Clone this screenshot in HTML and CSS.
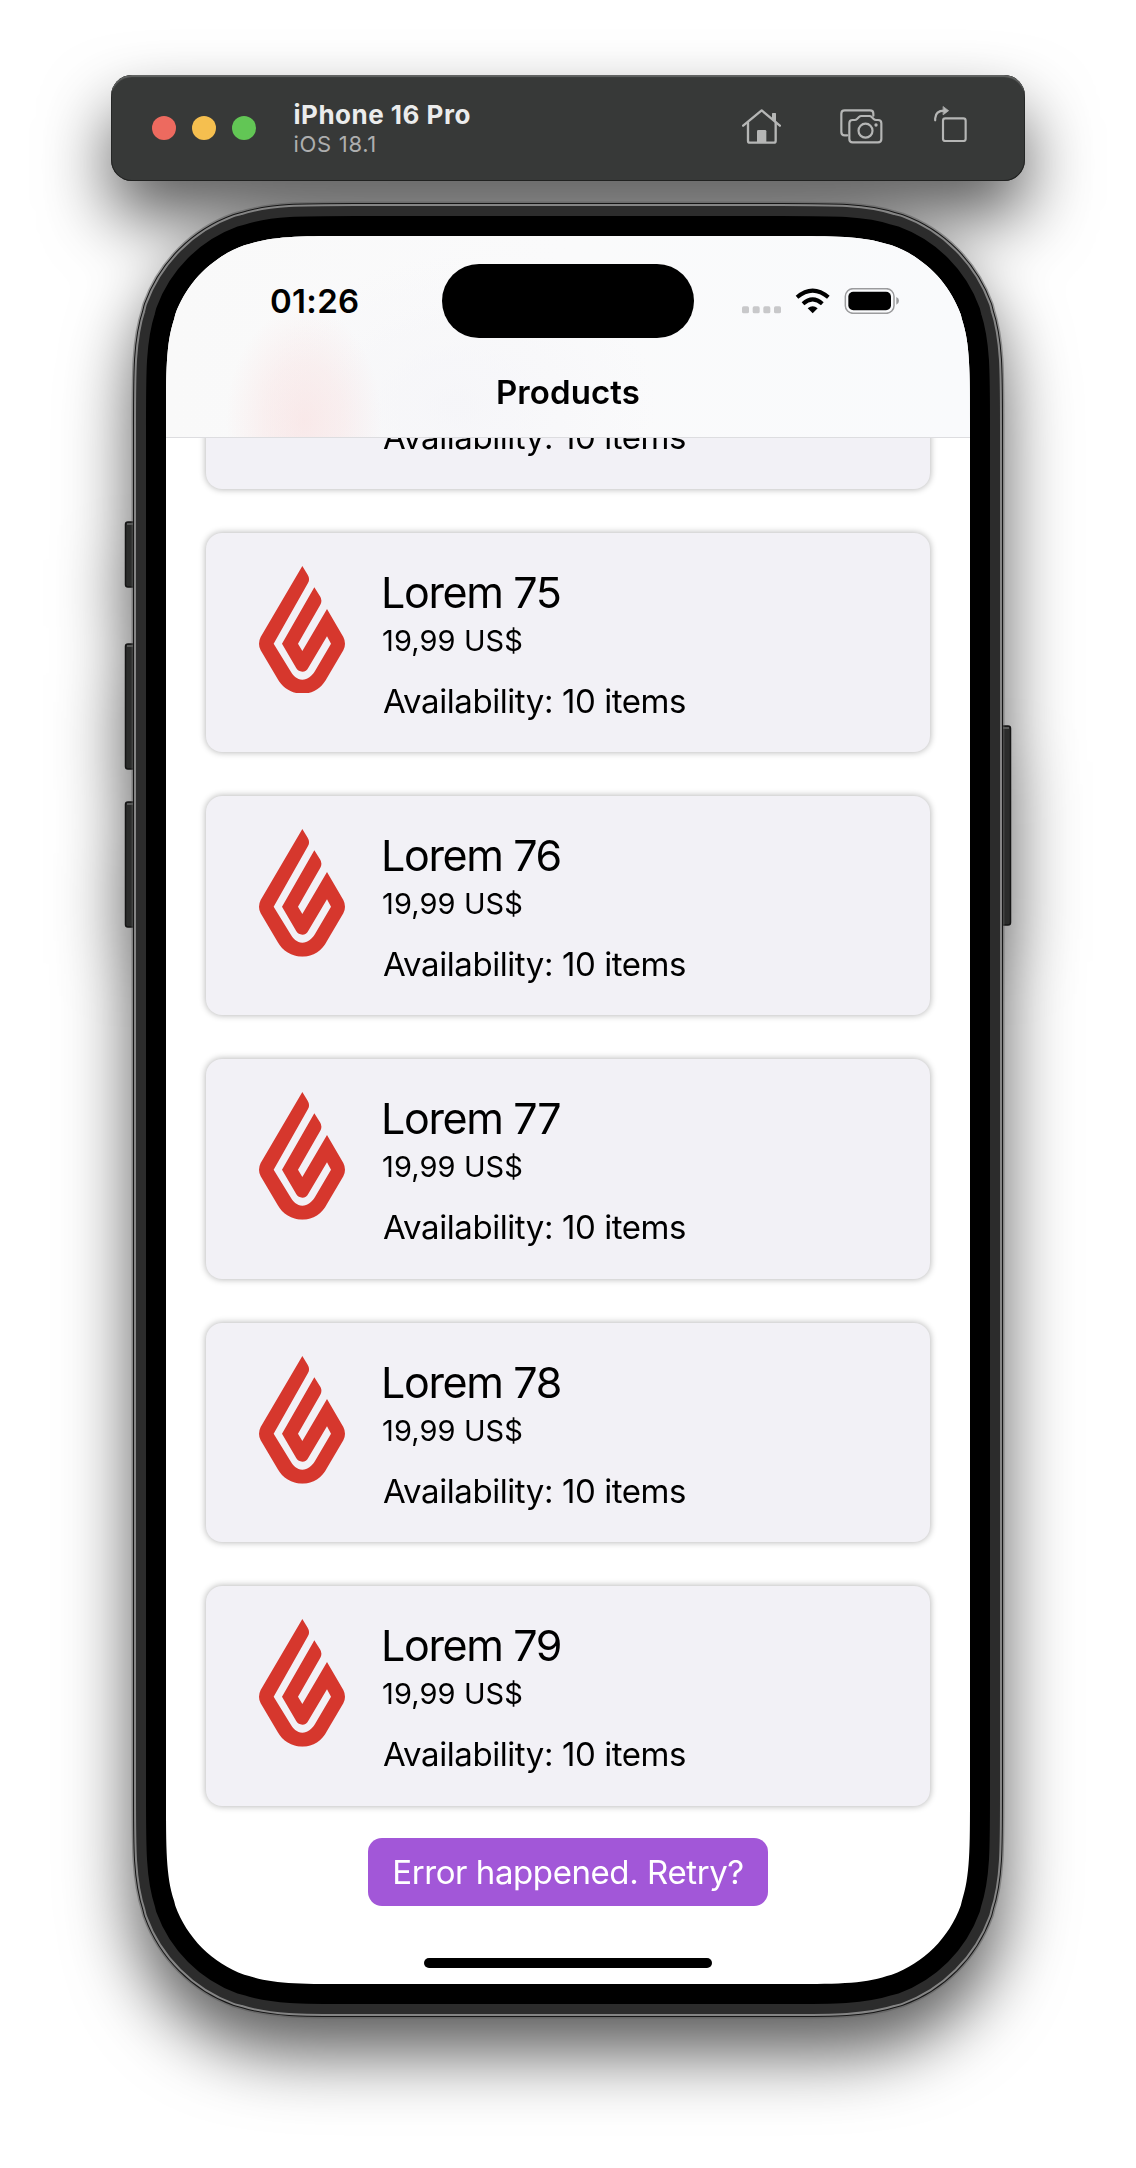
FILE: index.html
```html
<!DOCTYPE html>
<html lang="en">
<head>
<meta charset="utf-8">
<title>Products</title>
<link rel="stylesheet" href="styles.css">
</head>
<body>
<svg class="defs" aria-hidden="true">
  <symbol id="flame" viewBox="42 47 258 383">
    <path d="M172 47 L188 73 Q196 86 189 98 L86 280 L133 357 C144 377 156 388 172 388 C188 388 200 378 210 362 L258 280 L246 258 L190 352 Q184 364 172 364 Q160 364 154 354 L111 280 L208 111 L225 138 Q233 150 226 163 L159 280 L172 302 L246 176 L295 260 Q305 280 295 300 L246 383 C231 412 205 430 172 430 C140 430 112 412 98 386 L47 300 Q37 280 47 260 Z"/>
  </symbol>
</svg>
<div class="simulator">
  <header class="toolbar">
    <div class="lights"><i class="light red"></i><i class="light yellow"></i><i class="light green"></i></div>
    <div class="device">
      <div class="device-name">iPhone 16 Pro</div>
      <div class="device-os">iOS 18.1</div>
    </div>
    <div class="actions">
      <svg class="icon-home" viewBox="186 147 117 105" fill="none" stroke="#b5b6b5" stroke-width="7" stroke-linecap="round" stroke-linejoin="round">
        <path d="M189.500 197 L245 151 L299.500 197"/>
        <path d="M204 188 V242 Q204 248 210 248 H281 Q287 248 287 242 V188"/>
        <path d="M278 176 V161 H286 V183 Z" fill="#b5b6b5" stroke-width="4"/>
        <path d="M231 248 V214 Q231 210 235 210 H255 Q259 210 259 214 V248 Z" fill="#b5b6b5" stroke="none"/>
      </svg>
      <svg class="icon-camera" viewBox="480 148 128 104" fill="none" stroke="#b5b6b5" stroke-width="6.500" stroke-linecap="round" stroke-linejoin="round">
        <path d="M502 227 H494 Q484 227 484 217 V162 Q484 152 494 152 H570 Q580 152 580 162 V168"/>
        <path d="M518 181 H524 Q528 181 531 178 L537 172 Q540 169 544 169 H568 Q572 169 575 172 L581 178 Q584 181 588 181 H594 Q604 181 604 191 V238 Q604 248 594 248 H518 Q508 248 508 238 V191 Q508 181 518 181 Z"/>
        <circle cx="556.500" cy="213" r="21"/>
        <circle cx="588" cy="196" r="5" fill="#b5b6b5" stroke="none"/>
      </svg>
      <svg class="icon-rotate" viewBox="762 137 99 109" fill="none" stroke="#b5b6b5" stroke-width="6.500" stroke-linecap="round" stroke-linejoin="round">
        <rect x="789" y="174" width="68" height="68" rx="7"/>
        <path d="M765.500 180 V174 Q767 151 792 151"/>
        <path d="M790 139 L806 151 L790 163 Z" fill="#b5b6b5" stroke-width="2"/>
      </svg>
    </div>
  </header>

  <main class="phone">
    <svg class="frame" viewBox="0 0 804 1748" aria-hidden="true">
      <defs>
        <path id="body" d="M189.550 0 H614.450 C669.030 0 696.320 0 720.930 8.120 L725.690 9.290 C757.770 20.960 783.040 46.230 794.710 78.310 L795.880 83.070 C804 107.680 804 134.970 804 189.550 V1558.450 C804 1613.030 804 1640.320 795.880 1664.930 L794.710 1669.690 C783.040 1701.770 757.770 1727.040 725.690 1738.710 L720.930 1739.880 C696.320 1748 669.030 1748 614.450 1748 H189.550 C134.970 1748 107.680 1748 83.070 1739.880 L78.310 1738.710 C46.230 1727.040 20.960 1701.770 9.290 1669.690 L8.120 1664.930 C0 1640.320 0 1613.030 0 1558.450 V189.550 C0 134.970 0 107.680 8.120 83.070 L9.290 78.310 C20.960 46.230 46.230 20.960 78.310 9.290 L83.070 8.120 C107.680 0 134.970 0 189.550 0 Z"/>
      </defs>
      <g fill="#2b2c2b" stroke="#151515" stroke-width="1.500">
        <rect x="-40.500" y="286" width="14" height="65" rx="2.500"/>
        <rect x="-40.500" y="408" width="14" height="125" rx="2.500"/>
        <rect x="-40.500" y="566" width="14" height="125" rx="2.500"/>
        <rect x="830.500" y="490" width="14" height="199" rx="2.500"/>
      </g>
      <path stroke="#6a6a6a" stroke-width="1.500" d="M-39 288 H-33 M-39 410 H-33 M-39 568 H-33 M837 492 H843"/>
      <use href="#body" class="ring-halo"/>
      <use href="#body" class="ring-edge"/>
      <use href="#body" class="ring-light"/>
      <use href="#body" class="ring-metal"/>
      <use href="#body" class="ring-bezel"/>
    </svg>
    <div class="screen">
      <div class="navbar">
        <div class="status">
          <div class="time">01:26</div>
          <div class="island"></div>
          <svg class="status-icons" viewBox="127 294 474 78" aria-hidden="true">
            <g fill="#c8c8ca">
              <rect x="127" y="349" width="21" height="21" rx="5"/><rect x="159" y="349" width="21" height="21" rx="5"/><rect x="191" y="349" width="21" height="21" rx="5"/><rect x="223" y="349" width="21" height="21" rx="5"/>
            </g>
            <g fill="none" stroke="#000" stroke-width="12">
              <path d="M292 322 Q339 282 386 322"/>
              <path d="M310 341 Q339 315 368 341"/>
            </g>
            <path d="M339 370 L324 355 Q339 342 354 355 Z"/>
            <rect x="437" y="296" width="146" height="74" rx="23" fill="none" stroke="#9b9b9d" stroke-width="4.500"/>
            <rect x="446" y="305" width="128" height="56" rx="15"/>
            <path d="M590 321 Q598 325 598 332 Q598 340 590 344 Z" fill="#9b9b9d"/>
          </svg>
        </div>
        <h1 class="title">Products</h1>
      </div>
      <div class="list">
        <article class="card scrolled"><p class="stock">Availability: 10 items</p></article>
        <article class="card"><svg class="logo"><use href="#flame"/></svg><div class="info"><h2>Lorem 75</h2><p class="price">19,99 US$</p><p class="stock">Availability: 10 items</p></div></article>
        <article class="card"><svg class="logo"><use href="#flame"/></svg><div class="info"><h2>Lorem 76</h2><p class="price">19,99 US$</p><p class="stock">Availability: 10 items</p></div></article>
        <article class="card"><svg class="logo"><use href="#flame"/></svg><div class="info"><h2>Lorem 77</h2><p class="price">19,99 US$</p><p class="stock">Availability: 10 items</p></div></article>
        <article class="card"><svg class="logo"><use href="#flame"/></svg><div class="info"><h2>Lorem 78</h2><p class="price">19,99 US$</p><p class="stock">Availability: 10 items</p></div></article>
        <article class="card"><svg class="logo"><use href="#flame"/></svg><div class="info"><h2>Lorem 79</h2><p class="price">19,99 US$</p><p class="stock">Availability: 10 items</p></div></article>
        <button class="retry">Error happened. Retry?</button>
      </div>
      <div class="home-bar"></div>
    </div>
  </main>
</div>
</body>
</html>
```
FILE: styles.css
```css
* { box-sizing: border-box; }
body {
  margin: 0;
  background: #fff;
  font-family: Inter, "Liberation Sans", sans-serif;
  color: #000;
}
h1, h2, p { margin: 0; font-weight: 400; }
.defs { display: none; }

.simulator {
  height: 2168px;
  padding-top: 75px;
  display: flex;
  flex-direction: column;
  align-items: center;
  gap: 55px;
  overflow: hidden;
  filter: drop-shadow(0 36px 34px rgba(0, 0, 0, .64));
}

.toolbar {
  width: 914px;
  height: 106px;
  flex: none;
  padding: 0 58px 0 41px;
  display: flex;
  align-items: center;
  background: #373938;
  border-radius: 21px;
  box-shadow: inset 0 2px 1px #626463, inset 0 0 0 1px #202120;
}
.lights { display: flex; gap: 16px; }
.light { width: 24px; height: 24px; border-radius: 50%; }
.red { background: #ed6a5f; }
.yellow { background: #f5bf4f; }
.green { background: #62c655; }
.device { margin-left: 37.500px; padding-top: 2px; white-space: nowrap; }
.device-name {
  font-size: 26px;
  font-weight: 700;
  line-height: 30px;
  letter-spacing: .5px;
  color: #ebecec;
}
.device-os {
  font-size: 22px;
  line-height: 28px;
  letter-spacing: .7px;
  color: #adaeae;
}
.actions { margin: 0 0 3px auto; display: flex; align-items: flex-start; }
.icon-home { width: 39px; height: 35px; }
.icon-camera { width: 42.700px; height: 34.700px; margin-left: 59px; }
.icon-rotate { width: 33px; height: 36.300px; margin: -3px 0 0 51.300px; }

.phone { position: relative; flex: none; width: 804px; height: 1748px; }
.frame { position: absolute; inset: 0; width: 804px; height: 1748px; overflow: visible; }
.ring-halo { stroke: rgba(90, 90, 90, .5); stroke-width: 69px; }
.ring-edge { stroke: #161616; stroke-width: 66px; }
.ring-light { stroke: #858585; stroke-width: 64px; }
.ring-metal { stroke: #2c2c2c; stroke-width: 60px; }
.ring-bezel { stroke: #000; stroke-width: 40px; }

.screen {
  position: relative;
  height: 100%;
  display: flex;
  flex-direction: column;
  background: #fff;
  clip-path: path("M189.550 0H614.450C669.030 0 696.320 0 720.930 8.120L725.690 9.290C757.770 20.960 783.040 46.230 794.710 78.310L795.880 83.070C804 107.680 804 134.970 804 189.550V1558.450C804 1613.030 804 1640.320 795.880 1664.930L794.710 1669.690C783.040 1701.770 757.770 1727.040 725.690 1738.710L720.930 1739.880C696.320 1748 669.030 1748 614.450 1748H189.550C134.970 1748 107.680 1748 83.070 1739.880L78.310 1738.710C46.230 1727.040 20.960 1701.770 9.290 1669.690L8.120 1664.930C0 1640.320 0 1613.030 0 1558.450V189.550C0 134.970 0 107.680 8.120 83.070L9.290 78.310C20.960 46.230 46.230 20.960 78.310 9.290L83.070 8.120C107.680 0 134.970 0 189.550 0Z");
}

.navbar {
  flex: none;
  height: 201.500px;
  padding-top: 28px;
  border-bottom: 1.500px solid #dddde0;
  background:
    radial-gradient(ellipse 78px 115px at 138px 185px, rgba(249, 226, 226, .7), rgba(249, 229, 229, .5) 50%, rgba(249, 240, 240, 0)),
    radial-gradient(ellipse 200px 150px at 290px 170px, rgba(244, 244, 248, .7), rgba(244, 244, 248, 0)),
    linear-gradient(90deg, #f9f9f9, #fafafb 50%, #f9fafc);
}
.status { display: flex; height: 73.600px; align-items: center; }
.time {
  width: 172.300px;
  margin-left: 104px;
  font-size: 33px;
  font-weight: 600;
  line-height: 40px;
  letter-spacing: .3px;
}
.island { width: 251.400px; height: 73.600px; border-radius: 37px; background: #000; }
.status-icons { width: 158px; height: 26px; margin-left: 48.300px; }
.title {
  margin-top: 34.700px;
  text-align: center;
  font-size: 33px;
  font-weight: 600;
  line-height: 40px;
  letter-spacing: .1px;
}

.list {
  flex: 1;
  min-height: 0;
  padding: 0 40px;
  display: flex;
  flex-direction: column;
  gap: 44px;
  overflow: hidden;
}
.card {
  flex: none;
  height: 219.400px;
  padding: 33px 53px;
  display: flex;
  gap: 37px;
  background: #f2f1f6;
  border-radius: 16px;
  box-shadow: 0 0 7px rgba(0, 0, 0, .33);
}
.card.scrolled { margin-top: -168.200px; padding: 126px 176px 0; white-space: nowrap; }
.logo { width: 86px; height: 127.700px; fill: #d6372d; flex: none; }
.info { white-space: nowrap; }
.info h2 { margin-left: -1px; font-size: 43px; line-height: 52px; letter-spacing: -1.350px; }
.price { margin-top: 5px; font-size: 29px; line-height: 36px; letter-spacing: .1px; }
.stock { margin: 22px 0 0 1px; font-size: 33px; line-height: 40px; letter-spacing: -.430px; }

.retry {
  align-self: center;
  flex: none;
  width: 400px;
  height: 68px;
  margin-top: -12px;
  padding: 0;
  border: 0;
  border-radius: 14px;
  background: #a257d8;
  color: #fff;
  font: 400 33px/68px Inter, "Liberation Sans", sans-serif;
  letter-spacing: -.420px;
  white-space: nowrap;
}
.home-bar {
  position: absolute;
  left: 258px;
  bottom: 16px;
  width: 288px;
  height: 10px;
  border-radius: 5px;
  background: #000;
}
```
